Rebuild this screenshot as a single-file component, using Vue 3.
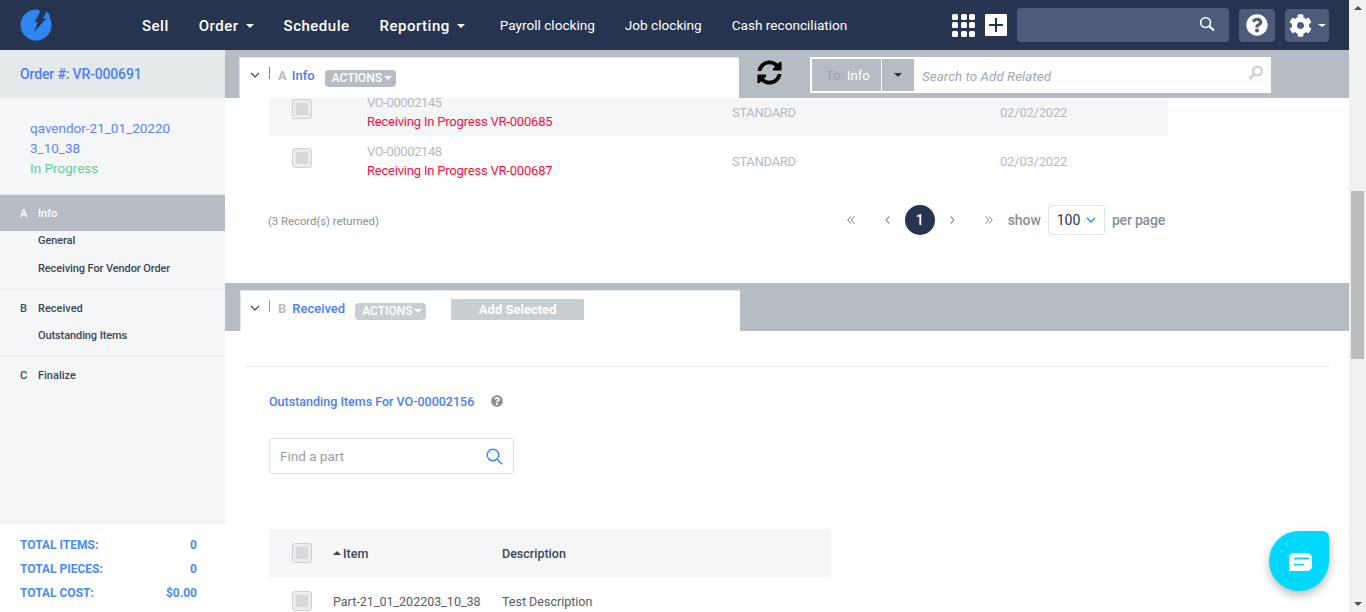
<script setup>
const navMain = [
  { label: 'Sell' },
  { label: 'Order', caret: true },
  { label: 'Schedule' },
  { label: 'Reporting', caret: true }
]
const navLinks = ['Payroll clocking', 'Job clocking', 'Cash reconciliation']
const orders = [
  { id: 'VO-00002145', status: 'Receiving In Progress VR-000685', type: 'STANDARD', date: '02/02/2022', shaded: true },
  { id: 'VO-00002148', status: 'Receiving In Progress VR-000687', type: 'STANDARD', date: '02/03/2022' }
]
const totals = [
  { label: 'TOTAL ITEMS:', value: '0' },
  { label: 'TOTAL PIECES:', value: '0' },
  { label: 'TOTAL COST:', value: '$0.00' }
]
const gearPath = 'M487.4 315.7l-42.6-24.6c4.3-23.2 4.3-47 0-70.2l42.6-24.6c4.9-2.8 7.1-8.6 5.5-14-11.1-35.6-30-67.8-54.7-94.6-3.8-4.1-10-5.1-14.8-2.3L380.8 110c-17.9-15.4-38.5-27.3-60.8-35.1V25.8c0-5.6-3.9-10.5-9.4-11.7-36.7-8.2-74.3-7.8-109.2 0-5.5 1.2-9.4 6.1-9.4 11.7V75c-22.2 7.9-42.8 19.8-60.8 35.1L88.7 85.5c-4.9-2.8-11-1.9-14.8 2.3-24.7 26.7-43.6 58.9-54.7 94.6-1.7 5.4.6 11.2 5.5 14L67.3 221c-4.3 23.2-4.3 47 0 70.2l-42.6 24.6c-4.9 2.8-7.1 8.6-5.5 14 11.1 35.6 30 67.8 54.7 94.6 3.8 4.1 10 5.1 14.8 2.3l42.6-24.6c17.9 15.4 38.5 27.3 60.8 35.1v49.2c0 5.6 3.9 10.5 9.4 11.7 36.7 8.2 74.3 7.8 109.2 0 5.5-1.2 9.4-6.1 9.4-11.7v-49.2c22.2-7.9 42.8-19.8 60.8-35.1l42.6 24.6c4.9 2.8 11 1.9 14.8-2.3 24.7-26.7 43.6-58.9 54.7-94.6 1.5-5.5-.7-11.3-5.6-14.1zM256 336c-44.1 0-80-35.9-80-80s35.9-80 80-80 80 35.9 80 80-35.9 80-80 80z'
const helpPath = 'M504 256c0 136.997-111.043 248-248 248S8 392.997 8 256C8 119.083 119.043 8 256 8s248 111.083 248 248zM262.655 90c-54.497 0-89.255 22.957-116.549 63.758-3.536 5.286-2.353 12.415 2.715 16.258l34.699 26.31c5.205 3.947 12.621 3.008 16.665-2.122 17.864-22.658 30.113-35.797 57.303-35.797 20.429 0 45.698 13.148 45.698 32.958 0 14.976-12.363 22.667-32.534 33.976C247.128 238.528 216 254.941 216 296v4c0 6.627 5.373 12 12 12h56c6.627 0 12-5.373 12-12v-1.333c0-28.462 83.186-29.647 83.186-106.667 0-58.002-60.165-102-116.531-102zM256 338c-25.365 0-46 20.635-46 46 0 25.364 20.635 46 46 46s46-20.636 46-46c0-25.365-20.635-46-46-46z'
const syncPath = 'M370.72 133.28C339.458 104.008 298.888 87.962 255.848 88c-77.458.068-144.328 53.178-162.791 126.85-1.344 5.363-6.122 9.15-11.651 9.15H24.103c-7.498 0-13.194-6.807-11.807-14.176C33.933 94.924 134.813 8 256 8c66.448 0 126.791 26.136 171.315 68.685L463.03 40.97C478.149 25.851 504 36.559 504 57.941V192c0 13.255-10.745 24-24 24H345.941c-21.382 0-32.09-25.851-16.971-40.971l41.75-41.749zM32 296h134.059c21.382 0 32.09 25.851 16.971 40.971l-41.75 41.75c31.262 29.273 71.835 45.319 114.876 45.28 77.418-.07 144.315-53.144 162.787-126.849 1.344-5.363 6.122-9.15 11.651-9.15h57.304c7.498 0 13.194 6.807 11.807 14.176C478.067 417.076 377.187 504 256 504c-66.448 0-126.791-26.136-171.315-68.685L48.97 471.03C33.851 486.149 8 475.441 8 454.059V320c0-13.255 10.745-24 24-24z'
</script>

<template>
  <div class="page">
    <div class="window">
      <header class="topbar">
        <svg class="logo" width="32" height="32" viewBox="0 0 32 32">
          <path d="M17 0.6 A15.5 15.5 0 1 0 31 12 L29 5 L25.5 1.8 L24.5 4.5 Z" fill="#2e86f2" />
          <path d="M21 1 L27.5 0 L23 10 L26.5 9.5 L14 23 L18 13 L14.5 13.5 Z" fill="#273450" />
        </svg>
        <nav class="nav-main">
          <a v-for="item in navMain" :key="item.label" class="nav-item">
            {{ item.label }}<span v-if="item.caret" class="caret"></span>
          </a>
        </nav>
        <nav class="nav-links">
          <a v-for="link in navLinks" :key="link">{{ link }}</a>
        </nav>
        <div class="tools">
          <div class="apps">
            <span v-for="n in 9" :key="n"></span>
          </div>
          <div class="plus">
            <svg width="16" height="16" viewBox="0 0 16 16"><path d="M8 1v14M1 8h14" stroke="#273450" stroke-width="2" /></svg>
          </div>
          <div class="top-search">
            <svg width="16" height="16" viewBox="0 0 17 17" fill="none" stroke="#fff" stroke-width="1.7">
              <circle cx="7" cy="7" r="5.2" /><path d="M11 11l5 4.5" stroke-width="2.2" />
            </svg>
          </div>
          <div class="tool-btn help">
            <svg width="22" height="22" viewBox="0 0 512 512"><path :d="helpPath" fill="#fff" /></svg>
          </div>
          <div class="tool-btn gear">
            <svg width="23" height="23" viewBox="0 0 512 512"><path :d="gearPath" fill="#fff" /></svg>
            <span class="caret small"></span>
          </div>
        </div>
      </header>

      <div class="body">
        <aside class="sidebar">
          <div class="order-no">Order #: VR-000691</div>
          <div class="side-scroll">
            <div class="vendor">
              <div class="vendor-name">qavendor-21_01_20220<br />3_10_38</div>
              <div class="vendor-status">In Progress</div>
            </div>
            <div class="step active"><b>A</b><span>Info</span></div>
            <div class="sub first">General</div>
            <div class="sub second">Receiving For Vendor Order</div>
            <div class="step sep"><b>B</b><span>Received</span></div>
            <div class="sub third">Outstanding Items</div>
            <div class="step sep"><b>C</b><span>Finalize</span></div>
          </div>
          <div class="totals">
            <div v-for="t in totals" :key="t.label" class="total-row">
              <span>{{ t.label }}</span><span>{{ t.value }}</span>
            </div>
          </div>
        </aside>

        <main class="main">
          <div class="band band-a">
            <div class="tab tab-a">
              <svg class="chev" width="10" height="6" viewBox="0 0 10 6" fill="none" stroke="#3c4658" stroke-width="1.2"><path d="M1 1l4 4 4-4" /></svg>
              <i class="tick"></i>
              <span class="letter">A</span>
              <span class="tab-title">Info</span>
              <span class="actions">ACTIONS<span class="caret tiny"></span></span>
            </div>
            <svg class="sync" width="25" height="25" viewBox="0 0 512 512"><path :d="syncPath" fill="#000" /></svg>
            <div class="related">
              <div class="to"><span class="to-inner"><em>To:</em> Info</span><span class="to-drop"><span class="caret dark"></span></span></div>
              <div class="related-input">
                <span>Search to Add Related</span>
                <svg width="16" height="16" viewBox="0 0 16 16" fill="none" stroke="#d2d2d2" stroke-width="2.4">
                  <circle cx="9.5" cy="6" r="4.4" /><path d="M6 9.5L1.5 14" stroke-width="3" />
                </svg>
              </div>
            </div>
          </div>

          <div class="content">
            <section class="orders">
              <div v-for="o in orders" :key="o.id" class="order-row" :class="{ shaded: o.shaded }">
                <span class="check"><i></i></span>
                <div class="order-id">
                  <div class="vo">{{ o.id }}</div>
                  <div class="status">{{ o.status }}</div>
                </div>
                <div class="order-type">{{ o.type }}</div>
                <div class="order-date">{{ o.date }}</div>
              </div>
              <div class="pager-row">
                <span class="records">(3 Record(s) returned)</span>
                <div class="pager">
                  <svg class="pg-first" width="8" height="8" viewBox="0 0 8 8" fill="none" stroke="#8f949c" stroke-width="1.1"><path d="M4 0.500L0.800 4 4 7.500M7.500 0.500L4.300 4 7.500 7.500" /></svg>
                  <svg class="pg-prev" width="5" height="8" viewBox="0 0 5 8" fill="none" stroke="#9a8f92" stroke-width="1.1"><path d="M4.300 0.500L1 4 4.300 7.500" /></svg>
                  <span class="pg-current">1</span>
                  <svg class="pg-next" width="5" height="8" viewBox="0 0 5 8" fill="none" stroke="#9a8f92" stroke-width="1.1"><path d="M0.700 0.500L4 4 0.700 7.500" /></svg>
                  <svg class="pg-last" width="8" height="8" viewBox="0 0 8 8" fill="none" stroke="#8f949c" stroke-width="1.1"><path d="M0.500 0.500L3.700 4 0.500 7.500M4 0.500L7.200 4 4 7.500" /></svg>
                  <span class="pg-label">show</span>
                  <span class="pg-select">100
                    <svg width="10" height="6" viewBox="0 0 10 6" fill="none" stroke="#2e86f2" stroke-width="1.4"><path d="M1 1l4 4 4-4" /></svg>
                  </span>
                  <span class="pg-label per">per page</span>
                </div>
              </div>
            </section>

            <div class="band band-b">
              <div class="tab tab-b">
                <svg class="chev" width="10" height="6" viewBox="0 0 10 6" fill="none" stroke="#3c4658" stroke-width="1.2"><path d="M1 1l4 4 4-4" /></svg>
                <i class="tick blue"></i>
                <span class="letter">B</span>
                <span class="tab-title">Received</span>
                <span class="actions light">ACTIONS<span class="caret tiny"></span></span>
                <span class="add-selected">Add Selected</span>
              </div>
            </div>

            <section class="received">
              <div class="rule"></div>
              <div class="outstanding">
                <span>Outstanding Items For VO-00002156</span>
                <svg width="12" height="12" viewBox="0 0 512 512"><path :d="helpPath" fill="#8a8f98" /></svg>
              </div>
              <div class="find">
                <span>Find a part</span>
                <svg width="17" height="17" viewBox="0 0 17 17" fill="none" stroke="#2e86f2" stroke-width="1.4">
                  <circle cx="7" cy="7" r="5.8" /><path d="M11.2 11.2l5 5" />
                </svg>
              </div>
              <div class="items">
                <div class="items-head">
                  <span class="check"><i></i></span>
                  <span class="col-item"><span class="sort"></span>Item</span>
                  <span class="col-desc">Description</span>
                </div>
                <div class="items-row">
                  <span class="check"><i></i></span>
                  <span class="col-item">Part-21_01_202203_10_38</span>
                  <span class="col-desc">Test Description</span>
                </div>
              </div>
            </section>
          </div>

          <button class="chat">
            <svg width="25" height="20" viewBox="0 0 25 20">
              <path d="M6 1h13a5 5 0 0 1 5 5v8a5 5 0 0 1-5 5H1V6a5 5 0 0 1 5-5z" fill="#fff" />
              <path d="M6 6.500h15M6 12.700h10" stroke="#00d8ff" stroke-width="1.800" />
            </svg>
          </button>
        </main>
      </div>
    </div>

    <div class="scrollbar">
      <span class="arrow up"></span>
      <div class="track"><div class="thumb"></div></div>
      <span class="arrow down"></span>
    </div>
  </div>
</template>

<style>
html, body { margin: 0; overflow: hidden; }
</style>

<style scoped>
.page {
  display: flex;
  width: 1366px;
  height: 612px;
  overflow: hidden;
  background: #fff;
  font-family: Roboto, "Liberation Sans", sans-serif;
  color: #3c4658;
}
.window {
  flex: 1;
  min-width: 0;
  display: flex;
  flex-direction: column;
}

/* top bar */
.topbar {
  height: 50px;
  flex: none;
  background: #273450;
  display: flex;
  align-items: center;
  color: #fff;
}
.logo { margin-left: 20px; margin-right: 90px; flex: none; }
.nav-main { display: flex; gap: 30px; font-size: 15px; font-weight: 500; letter-spacing: 0.5px; margin-top: 2px; }
.nav-item { display: flex; align-items: center; white-space: nowrap; }
.caret {
  display: inline-block;
  width: 0;
  height: 0;
  margin-left: 7px;
  border-left: 4px solid transparent;
  border-right: 4px solid transparent;
  border-top: 4px solid #fff;
}
.caret.small { margin-left: 6px; border-top-width: 3px; }
.caret.tiny { margin-left: 2px; }
.caret.dark { margin: 0; border-top-color: #273450; }
.nav-links { display: flex; gap: 30px; margin-left: 35px; font-size: 13.6px; white-space: nowrap; }
.tools { margin-left: auto; display: flex; align-items: center; }
.apps {
  display: grid;
  grid-template-columns: repeat(3, 6px);
  gap: 2.500px;
  margin-right: 10px;
}
.apps span { width: 6px; height: 6px; background: #fff; border-radius: 1.500px; }
.plus {
  width: 22px;
  height: 22px;
  background: #fff;
  border-radius: 1px;
  display: flex;
  align-items: center;
  justify-content: center;
  margin-right: 10px;
}
.top-search {
  width: 212px;
  height: 34px;
  background: #4c5c7a;
  border-radius: 4px;
  display: flex;
  justify-content: flex-end;
  padding: 8px 14px 0 0;
  box-sizing: border-box;
  margin-right: 10px;
}
.tool-btn {
  height: 33px;
  background: #4c5c7a;
  border-radius: 4px;
  display: flex;
  align-items: center;
  justify-content: center;
}
.help { width: 36px; margin-right: 10px; }
.gear { width: 44px; margin-right: 20px; justify-content: flex-start; padding-left: 4px; box-sizing: border-box; }

/* sidebar */
.body { flex: 1; display: flex; min-height: 0; }
.sidebar {
  width: 225px;
  flex: none;
  display: flex;
  flex-direction: column;
  font-size: 11px;
}
.order-no {
  height: 48px;
  flex: none;
  background: #e4e9e9;
  color: #4f7ff7;
  font-size: 14px;
  font-weight: 500;
  letter-spacing: -0.15px;
  line-height: 48px;
  padding-left: 20px;
}
.side-scroll { flex: 1; background: #f5f6f8; border-bottom: 2px solid #eef0f2; }
.vendor {
  height: 97px;
  box-sizing: border-box;
  padding: 20px 20px 0 30px;
  font-size: 13.500px;
  line-height: 20px;
  border-bottom: 2px solid #eceef1;
}
.vendor-name { color: #5c84f5; }
.vendor-status { color: #63cf95; }
.step { display: flex; align-items: center; color: #3c4658; font-weight: 500; height: 36px; padding-left: 20px; }
.step b { width: 18px; font-weight: 500; }
.step.active { background: #b6bcc4; color: #fff; }
.step.sep { border-top: 2px solid #eceef1; }
.sub { padding-left: 38px; font-weight: 500; color: #3c4658; letter-spacing: -0.1px; }
.sub.first { height: 19px; line-height: 19px; }
.sub.second { height: 38px; line-height: 37px; }
.sub.third { height: 29px; line-height: 20px; }
.totals { height: 88px; flex: none; box-sizing: border-box; padding: 9px 28px 0 20px; }
.total-row {
  display: flex;
  justify-content: space-between;
  height: 24px;
  line-height: 24px;
  color: #4a8cf5;
  font-size: 12px;
  font-weight: 700;
}

/* main column */
.main { flex: 1; min-width: 0; display: flex; flex-direction: column; position: relative; }
.band { background: #b6bcc4; display: flex; flex: none; }
.band-a { height: 48px; align-items: flex-end; padding-left: 14px; }
.band-b { height: 48px; align-items: flex-end; padding-left: 15px; }
.tab {
  background: #fff;
  box-sizing: border-box;
  display: flex;
  align-items: center;
  width: 500px;
  height: 41px;
  border-top: 1px solid #dfe2e6;
  border-left: 1px solid #dfe2e6;
  padding-left: 10px;
  font-size: 13px;
  font-weight: 500;
}
.tab-b { padding-left: 9px; }
.chev { flex: none; position: relative; top: -3px; }
.tick { width: 1px; height: 12px; background: #6d8bb0; margin: 0 8px 0 9px; position: relative; top: -5px; }
.tick.blue { background: #6ea5ee; }
.letter { color: #b6bcc4; margin-right: 5px; font-weight: 700; position: relative; top: -3px; }
.tab-b .letter { margin-right: 6px; }
.tab-title { color: #4a80f5; position: relative; top: -3px; }
.actions {
  margin-left: 10px;
  background: #b6bcc4;
  color: #fff;
  border-radius: 4px;
  height: 17px;
  line-height: 17px;
  width: 71px;
  box-sizing: border-box;
  padding-left: 7px;
  font-size: 12px;
  font-weight: 500;
  display: inline-flex;
  align-items: center;
  position: relative;
}
.actions.light { background: #c8ced1; }
.add-selected {
  margin-left: 25px;
  width: 133px;
  height: 21px;
  line-height: 21px;
  text-align: center;
  background: #c8ced1;
  color: #fff;
  font-size: 13px;
  font-weight: 700;
  position: relative;
  top: -2px;
}
.sync { margin-left: 18px; margin-bottom: 13px; flex: none; }
.related {
  margin-left: 28px;
  margin-bottom: 5px;
  width: 461px;
  height: 36px;
  background: #fff;
  display: flex;
  box-sizing: border-box;
  padding: 2px 0 2px 2px;
}
.to { display: flex; background: #b6bcc4; height: 32px; font-size: 13px; color: #fff; }
.to-inner { width: 70px; box-sizing: border-box; padding-left: 14px; line-height: 33px; border-right: 1px solid #fff; }
.to-inner em { font-style: normal; color: #9aa1ab; }
.to-drop { width: 32px; display: flex; align-items: center; justify-content: center; }
.related-input {
  flex: 1;
  display: flex;
  justify-content: space-between;
  padding: 0 7px 0 8px;
  font-size: 13.500px;
  font-style: italic;
  color: #a4a9b2;
  line-height: 35px;
}
.related-input svg { margin-top: 6px; }

/* scrolled content */
.content { flex: 1; min-height: 0; overflow: hidden; }
.orders { height: 185px; padding: 0 181px 0 44px; }
.order-row { display: flex; height: 49px; position: relative; }
.order-row.shaded { height: 38px; background: #f5f6f8; }
.check {
  width: 20px;
  height: 20px;
  box-sizing: border-box;
  border: 1px solid #cdd0d4;
  border-radius: 3px;
  background: #ececec;
  display: flex;
  align-items: center;
  justify-content: center;
  flex: none;
}
.check i { width: 12px; height: 12px; background: #d8d8d8; border-radius: 1px; }
.order-row .check { margin: 0 0 0 23px; position: relative; top: 1px; }
.order-row:not(.shaded) .check { top: 12px; }
.order-id { width: 365px; margin-left: 55px; font-size: 13px; line-height: 19px; letter-spacing: -0.2px; }
.order-row.shaded .order-id { margin-top: -5px; }
.order-row:not(.shaded) .order-id { margin-top: 6px; }
.vo { color: #b7b9bd; letter-spacing: -0.4px; }
.status { color: #f5133f; white-space: nowrap; }
.order-type { width: 268px; font-size: 13px; color: #b7b9bd; line-height: 30px; letter-spacing: -0.3px; }
.order-date { font-size: 13px; color: #b7b9bd; line-height: 30px; letter-spacing: -0.2px; }
.order-row:not(.shaded) .order-type, .order-row:not(.shaded) .order-date { line-height: 52px; }
.pager-row { display: flex; align-items: center; justify-content: space-between; height: 30px; margin-top: 20px; }
.records { font-size: 11.300px; color: #8a8f98; margin-left: -1px; position: relative; top: 1px; }
.pager { display: flex; align-items: center; font-size: 14px; color: #8a8f98; font-weight: 500; margin-right: 3px; }
.pg-first { margin-right: 30px; }
.pg-prev { margin-right: 15px; }
.pg-current {
  width: 30px;
  height: 30px;
  border-radius: 50%;
  background: #273450;
  color: #fff;
  line-height: 30px;
  text-align: center;
  font-size: 14px;
  margin-right: 15px;
}
.pg-next { margin-right: 30px; }
.pg-last { margin-right: 15px; }
.pg-select {
  width: 57px;
  height: 30px;
  box-sizing: border-box;
  margin: 0 7px;
  border: 1px solid #dfe3ee;
  border-radius: 3px;
  color: #273450;
  font-weight: 400;
  display: flex;
  align-items: center;
  justify-content: center;
  gap: 6px;
}
.pg-label.per { letter-spacing: -0.2px; }
.received { padding: 0 20px; }
.rule { height: 1px; background: #e8eaed; margin-top: 35px; }
.outstanding {
  display: flex;
  align-items: center;
  gap: 17px;
  color: #4a80f5;
  font-size: 12.500px;
  font-weight: 500;
  padding-left: 24px;
  margin-top: 26px;
  height: 16px;
}
.find {
  width: 245px;
  height: 36px;
  box-sizing: border-box;
  margin: 29px 0 0 24px;
  border: 1px solid #dcdfe3;
  border-radius: 3px;
  display: flex;
  align-items: center;
  justify-content: space-between;
  padding: 0 10px;
  font-size: 13.500px;
  color: #9a9ea6;
}
.items { margin: 55px 0 0 24px; width: 562px; font-size: 12.500px; }
.items-head { height: 48px; background: #f5f6f8; display: flex; align-items: center; font-weight: 500; color: #3c4658; padding-left: 23px; }
.items-row { display: flex; align-items: center; height: 48px; padding-left: 23px; color: #555c68; }
.col-item { width: 169px; flex: none; margin-left: 21px; white-space: nowrap; }
.sort {
  display: inline-block;
  margin: 0 2px 3px 0;
  border-left: 4px solid transparent;
  border-right: 4px solid transparent;
  border-bottom: 4px solid #3c4658;
}

/* floating chat */
.chat {
  position: absolute;
  right: 20px;
  bottom: 21px;
  width: 60px;
  height: 60px;
  padding: 2px 0 0 2px;
  border: 0;
  border-radius: 50% 6px 50% 50%;
  background: #00d8ff;
  box-shadow: 0 4px 10px rgba(0, 0, 0, 0.28);
  display: flex;
  align-items: center;
  justify-content: center;
}

/* scrollbar */
.scrollbar { width: 17px; flex: none; background: #f1f1f1; display: flex; flex-direction: column; align-items: center; }
.arrow { width: 0; height: 0; flex: none; border-left: 4px solid transparent; border-right: 4px solid transparent; }
.arrow.up { margin: 6px 0; border-bottom: 4px solid #505050; }
.arrow.down { margin: 6px 0; border-top: 4px solid #505050; }
.track { flex: 1; width: 100%; padding: 175px 2px 0 2px; box-sizing: border-box; }
.thumb { height: 168px; background: #bcbcbc; }
</style>
